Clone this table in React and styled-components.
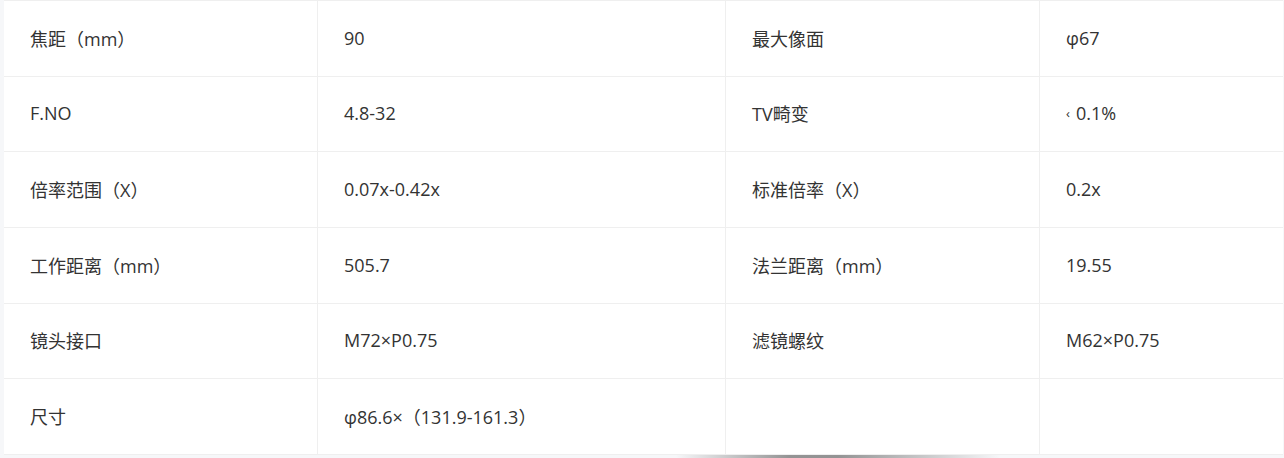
import React from "react";
import styled, { createGlobalStyle } from "styled-components";

const Global = createGlobalStyle`
  html, body { margin: 0; padding: 0; background: #f6f7f9; }
  body { font-family: "Open Sans", "Noto Sans CJK SC", sans-serif; }
`;

const Page = styled.div`
  padding: 0 1px 0 4px;
  width: 1284px;
  box-sizing: border-box;
  height: 458px;
  display: flex;
  flex-direction: column;
`;

const Table = styled.div`
  display: grid;
  grid-template-columns: 313px 408px 314px 1fr;
  grid-auto-rows: 75.67px;
  background: #fff;
  border-top: 1px solid #efefef;
`;

const Cell = styled.div`
  display: flex;
  align-items: center;
  padding-left: 26px;
  padding-bottom: 1px;
  box-sizing: border-box;
  border-bottom: 1px solid #efefef;
  border-left: ${(p) => (p.$first ? "none" : "1px solid #efefef")};
  font-size: 18px;
  color: #333;
  white-space: nowrap;
`;

const Shade = styled.div`
  height: 4px;
  margin-left: 672px;
  width: 324px;
  background: linear-gradient(
    to right,
    rgba(130, 130, 130, 0) 0%,
    rgba(130, 130, 130, 0.85) 35%,
    rgba(130, 130, 130, 0.85) 50%,
    rgba(130, 130, 130, 0) 100%
  );
`;

const Lt = styled.span`
  font-size: 13px;
  margin-right: 6px;
`;

const rows = [
  ["焦距（mm）", "90", "最大像面", "φ67"],
  ["F.NO", "4.8-32", "TV畸变", <><Lt>‹</Lt>0.1%</>],
  ["倍率范围（X）", "0.07x-0.42x", "标准倍率（X）", "0.2x"],
  ["工作距离（mm）", "505.7", "法兰距离（mm）", "19.55"],
  ["镜头接口", "M72×P0.75", "滤镜螺纹", "M62×P0.75"],
  ["尺寸", "φ86.6×（131.9-161.3）", "", ""],
];

export default function App() {
  return (
    <>
      <Global />
      <Page>
        <Table>
          {rows.map((r, i) =>
            r.map((c, j) => (
              <Cell key={`${i}-${j}`} $first={j === 0}>
                {c}
              </Cell>
            ))
          )}
        </Table>
        <Shade />
      </Page>
    </>
  );
}
